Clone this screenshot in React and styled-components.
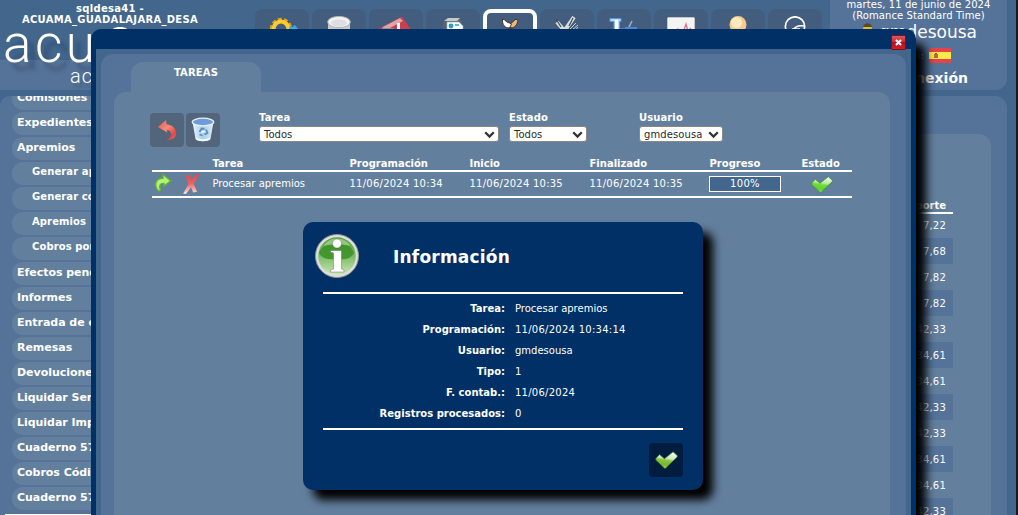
import React from "react";
import styled, { createGlobalStyle } from "styled-components";

const c = {
  base: "#43668d",
  panel: "#557399",
  card: "#637f9e",
  navy: "#003065",
  tool: "#425d7d",
  button: "#53657b",
};

const Global = createGlobalStyle`
  *, *::before, *::after { box-sizing: border-box; }
  body { margin: 0; overflow: hidden; background: ${c.base}; }
  svg { display: block; }
`;

const Page = styled.div`
  position: relative;
  width: 1018px;
  height: 515px;
  overflow: hidden;
  background: ${c.base};
  border-right: 2px solid #17191d;
  color: #fff;
  font: 10px/12px Verdana, "DejaVu Sans", sans-serif;
  white-space: nowrap;
`;

const Header = styled.header`
  display: flex;
  height: 90px;
  background: linear-gradient(${c.base} 60px, ${c.panel} 60px);
  width: 1007px;
  border-radius: 0 0 12px 0;
`;

const Brand = styled.div`
  width: 255px;
  flex: none;
`;

const DbName = styled.div`
  width: 220px;
  height: 25px;
  padding-top: 3px;
  text-align: center;
  font-weight: bold;
  font-size: 10px;
  line-height: 11px;
  letter-spacing: 0.3px;
`;

const Logo = styled.div`
  display: flex;
  height: 37px;
  padding-left: 3px;
  font: 300 53px/38px Roboto, sans-serif;
  letter-spacing: 3.5px;
  text-shadow: 7px 8px 4px rgba(20, 40, 70, 0.35);

  svg {
    margin: 2px 0 0 9px;
  }
`;

const SubLogo = styled.div`
  padding: 4px 0 0 70px;
  font: 300 20px/20px Roboto, sans-serif;
  letter-spacing: 1px;
  text-shadow: 3px 5px 3px rgba(20, 40, 70, 0.3);
`;

const Toolbar = styled.nav`
  display: flex;
  gap: 3px;
  width: 575px;
  flex: none;
  padding-top: 9px;
`;

const Tool = styled.div`
  width: 54px;
  height: 50px;
  padding-top: ${(p) => (p.$active ? "4px" : "7px")};
  display: flex;
  justify-content: center;
  border-radius: 8px;
  background: ${c.tool};
  border: ${(p) => (p.$active ? "4px solid #fff" : "0")};
`;

const Session = styled.div`
  flex: 1;
  background: ${c.panel};
  border-radius: 0 0 12px 0;
  text-align: center;
  font-size: 10px;
  line-height: 11px;
`;

const DateLine = styled.div`
  margin-top: ${(p) => p.$top || "0"};
  letter-spacing: ${(p) => p.$ls || "0"};
`;

const UserLine = styled.div`
  display: flex;
  justify-content: flex-end;
  gap: 5px;
  padding: 1px 30px 0 0;
  font-size: 17px;
  line-height: 20px;
`;

const LangLine = styled.div`
  display: flex;
  justify-content: flex-end;
  gap: 5px;
  padding: 6px 56px 0 0;
  font-size: 11px;
  line-height: 15px;
`;

const Logout = styled.div`
  padding: 6px 39px 0 0;
  text-align: right;
  font-weight: bold;
  font-size: 14px;
  line-height: 18px;
`;

const Main = styled.div`
  display: flex;
  gap: 6px;
  width: 1007px;
  height: 419px;
  margin-top: 6px;
`;

const Sidebar = styled.aside`
  width: 230px;
  flex: none;
  overflow: hidden;
  border-radius: 10px 0 0 0;
  background: ${c.panel};
`;

const Menu = styled.div`
  display: flex;
  flex-direction: column;
  gap: 2px;
  padding-left: 12px;
  margin-top: -9px;
`;

const MenuItem = styled.div`
  height: 23px;
  flex: none;
  border-radius: 11px;
  background: ${c.card};
  padding-left: ${(p) => (p.$sub ? "20px" : "5px")};
  font-weight: bold;
  font-size: ${(p) => (p.$sub ? "10px" : "11px")};
  line-height: ${(p) => (p.$sub ? "20px" : "21px")};
  letter-spacing: ${(p) => (p.$sub ? "0.1px" : "-0.03px")};
`;

const MenuRule = styled.div`
  height: 2px;
  margin: 4px 0 0 5px;
  background: #fff;
`;

const Content = styled.section`
  flex: 1;
  padding: 38px 16px 0 20px;
  border-radius: 12px 12px 0 0;
  background: ${c.panel};
`;

const ContentCard = styled.div`
  height: 381px;
  padding: 65px 38px 0 600px;
  border-radius: 12px 12px 0 0;
  background: ${c.card};
`;

const AmountHead = styled.div`
  height: 15px;
  padding-right: 7px;
  border-bottom: 2px solid #fff;
  text-align: right;
  font-weight: bold;
  line-height: 14px;
`;

const Amount = styled.div`
  height: ${(p) => (p.$first ? "24px" : "26px")};
  padding-right: 7px;
  text-align: right;
  line-height: ${(p) => (p.$first ? "23px" : "27px")};
  letter-spacing: 0.2px;
  background: ${(p) => (p.$alt ? c.panel : "transparent")};
`;

const Dialog = styled.section`
  position: absolute;
  left: 91px;
  top: 29px;
  width: 825px;
  height: 520px;
  padding: 0 5px;
  border-radius: 10px;
  background: ${c.navy};
  box-shadow: 10px 14px 10px #000;
`;

const DialogBar = styled.div`
  display: flex;
  justify-content: flex-end;
  height: 20px;
  padding: 6px 5px 0 0;
`;

const Close = styled.button`
  position: relative;
  z-index: 1;
  display: grid;
  place-items: center;
  width: 15px;
  height: 15px;
  padding: 0;
  border: 1px solid #701421;
  border-radius: 1px;
  background: linear-gradient(#e05560, #c92531 50%, #b7101d 50%, #d21d27);
`;

const DialogBody = styled.div`
  height: 500px;
  padding: 5px 5px 0;
  background: ${c.base};
`;

const DialogPanel = styled.div`
  height: 495px;
  padding: 8px 16px 0 13px;
  border-radius: 12px 12px 0 0;
  background: ${c.panel};
`;

const Tab = styled.div`
  width: 130px;
  height: 30px;
  margin-left: 17px;
  border-radius: 12px 12px 0 0;
  background: ${c.card};
  text-align: center;
  font-weight: bold;
  line-height: 21px;
  letter-spacing: 0.15px;
`;

const DialogCard = styled.div`
  height: 457px;
  padding: 21px 36px 0;
  border-radius: 12px 12px 0 0;
  background: ${c.card};
`;

const Filters = styled.div`
  display: flex;
  height: 34px;
`;

const IconButton = styled.button`
  display: grid;
  place-items: center;
  width: 34px;
  height: 34px;
  padding: 0;
  margin-right: 2px;
  border: 0;
  border-radius: 4px;
  background: ${(p) => p.$bg || c.button};
`;

const Field = styled.label`
  display: flex;
  flex-direction: column;
  width: ${(p) => p.$w}px;
  margin-left: ${(p) => p.$gap}px;
  font-weight: bold;
  line-height: 10px;
  letter-spacing: 0.1px;
`;

const SelectBox = styled.span`
  display: flex;
  justify-content: space-between;
  align-items: center;
  height: 16px;
  margin-top: 3px;
  padding: 1px 3px 0 4px;
  border: 1px solid #8c8780;
  border-radius: 3px;
  background: #fff;
  color: #2c2c2c;
  font-weight: normal;
  letter-spacing: ${(p) => p.$ls || "0"};
`;

const TaskTable = styled.div`
  width: 700px;
  margin: 9px 0 0 2px;
`;

const TaskRow = styled.div`
  display: grid;
  grid-template-columns: 29px 31.5px 137px 120px 120px 120px 92px 50px;
  align-items: ${(p) => (p.$head ? "start" : "center")};
  height: ${(p) => (p.$head ? "16px" : "26px")};
  line-height: ${(p) => (p.$head ? "15px" : "14px")};
  border-bottom: 2px solid #fff;
  font-weight: ${(p) => (p.$head ? "bold" : "normal")};
`;

const Stamp = styled.span`
  letter-spacing: 0.24px;
`;

const Progress = styled.div`
  width: 72px;
  height: 16px;
  margin: 0 0 1px -0.5px;
  border: 1px solid #fff;
  background: ${c.base};
  text-align: center;
  line-height: 13px;
  letter-spacing: 0.3px;
`;

const StateCell = styled.div`
  padding-left: 9px;
`;

const InfoBox = styled.section`
  position: absolute;
  left: 303px;
  top: 222px;
  width: 400px;
  height: 268px;
  padding: 11px 20px 0;
  border-radius: 10px;
  background: ${c.navy};
  box-shadow: 10px 10px 10px #000;
`;

const InfoHead = styled.div`
  display: flex;
  height: 59px;
  margin-left: -9px;
`;

const InfoTitle = styled.h2`
  margin: 13px 0 0 33px;
  font-size: 17px;
  line-height: 22px;
  letter-spacing: 0.2px;
`;

const InfoList = styled.dl`
  display: grid;
  grid-template-columns: 182px 1fr;
  grid-auto-rows: 21px;
  column-gap: 10px;
  height: 138px;
  margin: 0;
  padding-top: 4px;
  border-top: 2px solid #fff;
  border-bottom: 2px solid #fff;
  line-height: 21px;
`;

const Term = styled.dt`
  text-align: right;
  font-weight: bold;
`;

const Value = styled.dd`
  margin: 0;
  letter-spacing: ${(p) => (p.$stamp ? "0.26px" : "0")};
`;

const InfoFoot = styled.div`
  display: flex;
  justify-content: flex-end;
  padding-top: 13px;
  margin-right: -2px;
`;

const Chevron = () => (
  <svg width="11" height="8" viewBox="0 0 11 8">
    <path d="M1.200 1.200l4.300 4.300 4.300-4.300" fill="none" stroke="#333" strokeWidth="2.300" />
  </svg>
);

const Check = ({ w, h, id, dark }) => (
  <svg width={w} height={h} viewBox="0 0 22 17">
    <defs>
      <linearGradient id={id} x1="0.600" y1="0" x2="0.400" y2="1">
        <stop offset="0" stopColor="#f4fdee" />
        <stop offset=".4" stopColor={dark ? "#cfe6bd" : "#b5ee90"} />
        <stop offset=".52" stopColor={dark ? "#8cc63c" : "#6fdc3c"} />
        <stop offset=".8" stopColor={dark ? "#73b430" : "#5fd02c"} />
        <stop offset="1" stopColor={dark ? "#a5dd58" : "#8ae860"} />
      </linearGradient>
    </defs>
    <path d="M.7 7L4.400 3.300 9 7.300 17.300.7l4 3.600v1.300L10.200 16.300H9L.7 8.600z" fill={`url(#${id})`} stroke={dark ? "#2f6b2a" : "#3f8a35"} strokeWidth=".7" />
  </svg>
);

const GearIcon = () => (
  <svg width="34" height="34" viewBox="0 0 34 34">
    <circle cx="16" cy="13" r="9" fill="none" stroke="#e0a012" strokeWidth="4.500" strokeDasharray="3.600 2" />
    <circle cx="16" cy="13" r="7.400" fill="none" stroke="#ffcb30" strokeWidth="4" />
    <path d="M23 15l2-5 3 1 1-2 2 1 1 2 2 1v8H22z" fill="#42a7e0" />
  </svg>
);
const DatabaseIcon = () => (
  <svg width="26" height="32" viewBox="0 0 26 32">
    <path d="M2 6v22h22V6z" fill="#c9c9cb" />
    <ellipse cx="13" cy="6" rx="11.300" ry="5.600" fill="#f3f3f3" stroke="#b5b5b8" />
    <ellipse cx="13" cy="7" rx="8" ry="3.500" fill="#dedee0" />
  </svg>
);
const HouseIcon = () => (
  <svg width="34" height="32" viewBox="0 0 34 32">
    <path d="M1 12L23 .5 33 15v12H2z" fill="#c93f4d" />
    <path d="M3 11.500L21 2l3 3L9 13z" fill="#e2a3a8" />
    <path d="M18 7h3v10h-3z" fill="#fff" /><path d="M3 12h10l3 1v6H3z" fill="#8b9296" />
  </svg>
);
const PapersIcon = () => (
  <svg width="24" height="32" viewBox="0 0 24 32">
    <path d="M2 5l5-3h12l2 3v20H2z" fill="#59636b" />
    <path d="M3 5l4-3h12l-3 3H3z" fill="#c4c9cc" />
    <path d="M6 6h12l4 4v18H6z" fill="#f5fafd" stroke="#a9b6c0" strokeWidth=".6" />
    <circle cx="10" cy="10" r="2.400" fill="#299ac4" /><path d="M14 9h4M8 14h12" stroke="#4496bf" strokeWidth="1.400" />
  </svg>
);
const HandsIcon = () => (
  <svg width="20" height="30" viewBox="0 0 20 30">
    <path d="M8 9L16 2l2 1.500c-1 4-2 6-6 7.500z" fill="#f0b57c" stroke="#3a2a20" strokeWidth=".9" />
    <path d="M2.500 2c3 .5 4 4 7 4l2 1-2 4C5 11 2 8 2.500 2z" fill="#fff" stroke="#3a2a20" strokeWidth=".9" />
    <path d="M5 14l6-2.500 5 2V20H5z" fill="#f0b57c" stroke="#3a2a20" strokeWidth=".9" />
  </svg>
);
const ToolsIcon = () => (
  <svg width="30" height="30" viewBox="0 0 30 30">
    <path d="M5 6l11 13M22 1L11 17" stroke="#d8dcdc" strokeWidth="4" />
    <path d="M4 3l5 8M21 2l-4 8" stroke="#454c50" strokeWidth="1.200" />
    <path d="M18 13l6-6M20 14l6-5M22 16l4-5" stroke="#c9cdd0" />
    <path d="M11 17l5-5 4 5-5 5z" fill="#e8cb38" />
  </svg>
);
const ValveIcon = () => (
  <svg width="32" height="30" viewBox="0 0 32 30">
    <path d="M2 2.500h11v3h-1.500V13H28l2 3v14H6V5.500H2z" fill="#b9dbfb" stroke="#5c9be2" />
    <path d="M7 4h3v15H7z" fill="#fff" /><path d="M20 13l4-8" stroke="#a8afb8" strokeWidth="1.500" />
    <path d="M17 12h12" stroke="#4a86d8" strokeWidth="2" />
  </svg>
);
const ChartIcon = () => (
  <svg width="28" height="30" viewBox="0 0 28 30">
    <rect x=".5" y="1.500" width="27" height="26" rx="1" fill="#f5f4f5" stroke="#c4c6c9" />
    <path d="M7 15l4-2 3 2 3-1 2-6 2 7 3-3" fill="none" stroke="#e17982" strokeWidth="1.400" />
  </svg>
);
const PersonIcon = () => (
  <svg width="24" height="30" viewBox="0 0 24 30">
    <circle cx="12" cy="8.500" r="8.500" fill="#f4cb89" />
    <circle cx="10.500" cy="6.500" r="5.500" fill="#fff0cf" opacity=".8" />
  </svg>
);
const GaugeIcon = () => (
  <svg width="24" height="30" viewBox="0 0 24 30">
    <circle cx="12" cy="10.500" r="9.700" fill="none" stroke="#fff" strokeWidth="1.700" />
    <path d="M10 16c0-4 4-7 11-6M9 13h8" fill="none" stroke="#fff" strokeWidth="1.500" />
  </svg>
);

const tools = [GearIcon, DatabaseIcon, HouseIcon, PapersIcon, HandsIcon, ToolsIcon, ValveIcon, ChartIcon, PersonIcon, GaugeIcon];

const menu = [
  ["Comisiones"], ["Expedientes"], ["Apremios"],
  ["Generar apremios", 1], ["Generar cobros", 1], ["Apremios", 1], ["Cobros por apremio", 1],
  ["Efectos pendientes"], ["Informes"], ["Entrada de cobros"], ["Remesas"], ["Devoluciones"],
  ["Liquidar Servicios"], ["Liquidar Impuestos"], ["Cuaderno 57"], ["Cobros Código"], ["Cuaderno 57"],
];

const amounts = ["7,22", "7,68", "7,82", "7,82", "42,33", "34,61", "34,61", "42,33", "42,33", "34,61", "34,61", "42,33"];

const info = [
  ["Tarea:", "Procesar apremios"],
  ["Programación:", "11/06/2024 10:34:14", true],
  ["Usuario:", "gmdesousa"],
  ["Tipo:", "1"],
  ["F. contab.:", "11/06/2024", true],
  ["Registros procesados:", "0"],
];

export default function App() {
  return (
    <>
      <Global />
      <Page>
        <Header>
          <Brand>
            <DbName>sqldesa41 -<br />ACUAMA_GUADALAJARA_DESA</DbName>
            <Logo>
              acu
              <svg width="26" height="34" viewBox="0 0 26 34">
                <path d="M2 10C4-1.500 22-1.500 24 10v23" fill="none" stroke="#fff" strokeWidth="3" />
              </svg>
            </Logo>
            <SubLogo>acu</SubLogo>
          </Brand>
          <Toolbar>
            {tools.map((Icon, i) => <Tool key={i} $active={i === 4}><Icon /></Tool>)}
          </Toolbar>
          <Session>
            <DateLine $top="-1px" $ls="0.08px">martes, 11 de junio de 2024</DateLine>
            <DateLine $ls="0.08px">(Romance Standard Time)</DateLine>
            <UserLine>
              <svg width="13" height="20" viewBox="0 0 13 20">
                <circle cx="6.500" cy="7" r="4.500" fill="#e3ba3b" /><path d="M2 5c1-5 8-5 9 0z" fill="#5c4926" />
              </svg>
              gmdesousa
            </UserLine>
            <LangLine>
              Idioma:
              <svg width="22" height="15" viewBox="0 0 22 15">
                <path d="M0 0h22v15H0z" fill="#e34449" /><path d="M0 4h22v7H0z" fill="#ffe849" />
                <path d="M5 6h4v4H5z" fill="#b9693f" /><path d="M6 5h2v1H6z" fill="#a7483b" />
              </svg>
            </LangLine>
            <Logout>Desconexión</Logout>
          </Session>
        </Header>
        <Main>
          <Sidebar>
            <Menu>
              {menu.map(([t, sub], i) => <MenuItem key={i} $sub={sub}>{t}</MenuItem>)}
            </Menu>
            <MenuRule />
          </Sidebar>
          <Content>
            <ContentCard>
              <AmountHead>Importe</AmountHead>
              {amounts.map((a, i) => <Amount key={i} $first={i === 0} $alt={i % 2 === 1}>{a}</Amount>)}
            </ContentCard>
          </Content>
        </Main>

        <Dialog>
          <DialogBar>
            <Close>
              <svg width="7" height="7" viewBox="0 0 7 7">
                <path d="M1 1l5 5M6 1L1 6" stroke="#fff" strokeWidth="2.100" />
              </svg>
            </Close>
          </DialogBar>
          <DialogBody>
            <DialogPanel>
              <Tab>TAREAS</Tab>
              <DialogCard>
                <Filters>
                  <IconButton>
                    <svg width="22" height="24" viewBox="0 0 22 24">
                      <defs>
                        <linearGradient id="undo" x1="0" y1="0" x2="1" y2="1">
                          <stop offset="0" stopColor="#ef5248" /><stop offset=".45" stopColor="#f58b7d" /><stop offset=".8" stopColor="#e9423b" /><stop offset="1" stopColor="#f3968a" />
                        </linearGradient>
                      </defs>
                      <path d="M2 9L10 2l.6 4.200C17 7 20.300 11 20 15.500c-.3 4-3.500 6.500-9 6.500 4-2.500 4.500-4.500 4-7-.4-2-2-3-4.200-3l.8 2.700z" fill="url(#undo)" />
                    </svg>
                  </IconButton>
                  <IconButton>
                    <svg width="24" height="26" viewBox="0 0 24 26">
                      <defs>
                        <linearGradient id="bin" x1="0" y1="0" x2="1" y2="0">
                          <stop offset="0" stopColor="#e9f4fd" /><stop offset=".5" stopColor="#a9cdee" /><stop offset="1" stopColor="#dcebf8" />
                        </linearGradient>
                      </defs>
                      <path d="M1.500 5l3 17c1 3 14 3 15 0l3-17z" fill="url(#bin)" />
                      <path d="M5 20c3 3 11 3 14 0l-.5 2.500c-2 2.200-11 2.200-13 0z" fill="#f5f8fb" />
                      <ellipse cx="12" cy="5" rx="10.700" ry="3.800" fill="#6d9dd8" stroke="#e8f1fa" strokeWidth="1.300" />
                      <path d="M8.500 15l2-3.500 3 .5M15 12.500l1.500 3.500-3 1.500M11.500 18.500l-3-1" fill="none" stroke="#5a90be" strokeWidth="1.800" />
                      <path d="M10.500 15.500l3-1.500" stroke="#fff" strokeWidth="1.500" />
                    </svg>
                  </IconButton>
                  <Field $w={240} $gap={37}>Tarea<SelectBox>Todos<Chevron /></SelectBox></Field>
                  <Field $w={78} $gap={10}>Estado<SelectBox>Todos<Chevron /></SelectBox></Field>
                  <Field $w={84} $gap={52}>Usuario<SelectBox $ls="0.1px">gmdesousa<Chevron /></SelectBox></Field>
                </Filters>
                <TaskTable>
                  <TaskRow $head>
                    <span /><span /><span>Tarea</span><span>Programación</span><span>Inicio</span><span>Finalizado</span><span>Progreso</span><span>Estado</span>
                  </TaskRow>
                  <TaskRow>
                    <svg width="23" height="22" viewBox="0 0 22 20">
                      <path d="M10.500 1l7.500 6-6.500 5V9.500C8 9 6.500 11 8 15.500c.2 1-1.500 1.800-2.500.5C1.500 10 4 4.500 10.500 4.500z" fill="#b6ee7d" stroke="#5cb62c" strokeWidth="1.300" />
                    </svg>
                    <svg width="20" height="22" viewBox="0 0 18 20">
                      <defs>
                        <linearGradient id="del" x1="0" y1="0" x2="0" y2="1">
                          <stop offset="0" stopColor="#ee4444" /><stop offset=".45" stopColor="#e96060" /><stop offset="1" stopColor="#ffe4e2" />
                        </linearGradient>
                      </defs>
                      <path d="M4 2h4l1.500 4.500L14 1l2.500.2L11.500 10l3 7-3.500.8L9 13l-4.500 6.200-2.700-.4L6.800 10z" fill="url(#del)" />
                    </svg>
                    <span>Procesar apremios</span>
                    <Stamp>11/06/2024 10:34</Stamp>
                    <Stamp>11/06/2024 10:35</Stamp>
                    <Stamp>11/06/2024 10:35</Stamp>
                    <Progress>100%</Progress>
                    <StateCell><Check w={22} h={17} id="ok1" /></StateCell>
                  </TaskRow>
                </TaskTable>
              </DialogCard>
            </DialogPanel>
          </DialogBody>
        </Dialog>

        <InfoBox>
          <InfoHead>
            <svg width="46" height="46" viewBox="0 0 46 46">
              <defs>
                <linearGradient id="orb" x1="0" y1="0" x2="0" y2="1">
                  <stop offset="0" stopColor="#55a03a" /><stop offset=".5" stopColor="#7dba65" /><stop offset="1" stopColor="#c8e8b4" />
                </linearGradient>
              </defs>
              <circle cx="23" cy="23" r="21.500" fill="#dedede" stroke="#8f9590" strokeWidth="1" />
              <circle cx="23" cy="23" r="18.800" fill="url(#orb)" />
              <path d="M5 20C10 6 36 6 40 20c-3 6-10 7-17 6-7 1-15 0-18-6z" fill="#368f22" opacity=".8" />
              <path d="M10 13C14 3 32 3 36 13c-7-2-19-2-26 0z" fill="#b7dca8" opacity=".6" />
              <g fill="#fff" stroke="#555" strokeWidth=".4">
                <circle cx="23" cy="10.500" r="4.500" />
                <path d="M16.500 17.500H27.500v18.500l2.500 1v2H16.500v-2l3-1V20l-3-.7z" />
              </g>
            </svg>
            <InfoTitle>Información</InfoTitle>
          </InfoHead>
          <InfoList>
            {info.map(([k, v, stamp]) => (
              <React.Fragment key={k}><Term>{k}</Term><Value $stamp={stamp}>{v}</Value></React.Fragment>
            ))}
          </InfoList>
          <InfoFoot>
            <IconButton $bg="#001d3f"><Check w={23} h={18} id="ok2" dark /></IconButton>
          </InfoFoot>
        </InfoBox>
      </Page>
    </>
  );
}
